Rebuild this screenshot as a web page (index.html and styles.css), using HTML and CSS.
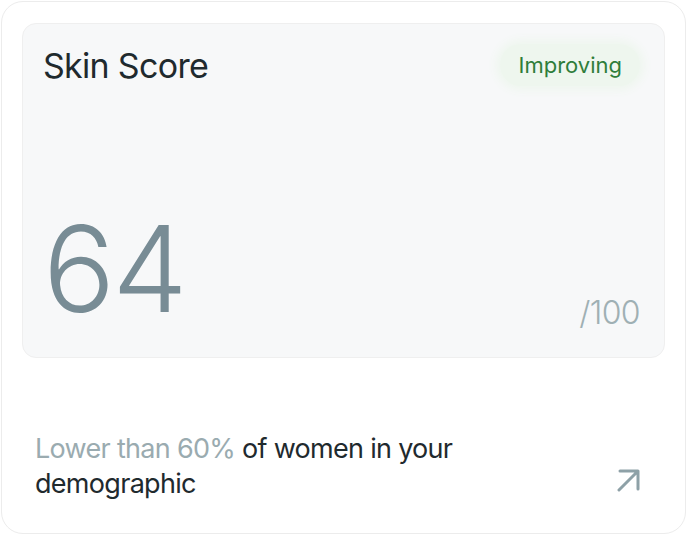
FILE: index.html
```html
<!DOCTYPE html>
<html lang="en">
<head>
    <meta charset="UTF-8">
    <meta name="viewport" content="width=device-width, initial-scale=1.0">
    <title>Skin Score</title>
    <link rel="stylesheet" href="styles.css">
</head>
<body>
    <div class="card">
        <div class="score-panel">
            <div class="panel-head">
                <h1>Skin Score</h1>
                <span class="badge">Improving</span>
            </div>
            <div class="panel-foot">
                <span class="score">64</span>
                <span class="out-of">/100</span>
            </div>
        </div>
        <div class="summary">
            <p><span class="muted">Lower than 60%</span> of women in your<br>demographic</p>
            <svg class="arrow" width="24" height="24" viewBox="0 0 24 24" fill="none">
                <path d="M3 22L21.5 3.5M4 3H22V21" stroke="#8ea1a7" stroke-width="3" stroke-linecap="round" stroke-linejoin="round"/>
            </svg>
        </div>
    </div>
</body>
</html>
```

FILE: styles.css
```css
body {
    margin: 0;
    padding: 1px;
    font-family: Inter, "Noto Sans", sans-serif;
    background: #fff;
}

.card {
    box-sizing: border-box;
    width: 685px;
    height: 533px;
    border: 1px solid #ececec;
    border-radius: 22px;
    padding: 21px 20px 0 20px;
    display: flex;
    flex-direction: column;
}

.score-panel {
    box-sizing: border-box;
    height: 335px;
    background: #f7f8f9;
    border: 1px solid #efefef;
    border-radius: 14px;
    padding: 20px 24px 28px 20px;
    display: flex;
    flex-direction: column;
    justify-content: space-between;
}

.panel-head {
    display: flex;
    justify-content: space-between;
    align-items: center;
}

h1 {
    margin: 0;
    font-size: 34px;
    font-weight: 400;
    color: #1f2a2e;
    letter-spacing: -0.7px;
}

.badge {
    font-size: 22px;
    color: #2f7d3a;
    background: #eef6ee;
    padding: 8px 18px;
    border-radius: 22px;
    box-shadow: 0 0 10px 4px #eef6ee;
}

.panel-foot {
    display: flex;
    justify-content: space-between;
    align-items: flex-end;
}

.score {
    font-size: 120px;
    font-weight: 300;
    color: #788c95;
    line-height: 1;
    letter-spacing: -3px;
}

.out-of {
    font-size: 32px;
    font-weight: 300;
    color: #9fb0b4;
    line-height: 1;
    letter-spacing: -0.6px;
}

.summary {
    flex: 1;
    display: flex;
    justify-content: space-between;
    align-items: flex-end;
    padding: 0 25px 32px 13px;
}

.summary p {
    margin: 0;
    font-size: 27px;
    line-height: 35px;
    color: #1f2a2e;
    letter-spacing: -0.7px;
}

.muted {
    color: #9aabb0;
}

.arrow {
    margin-bottom: 9px;
}
```
